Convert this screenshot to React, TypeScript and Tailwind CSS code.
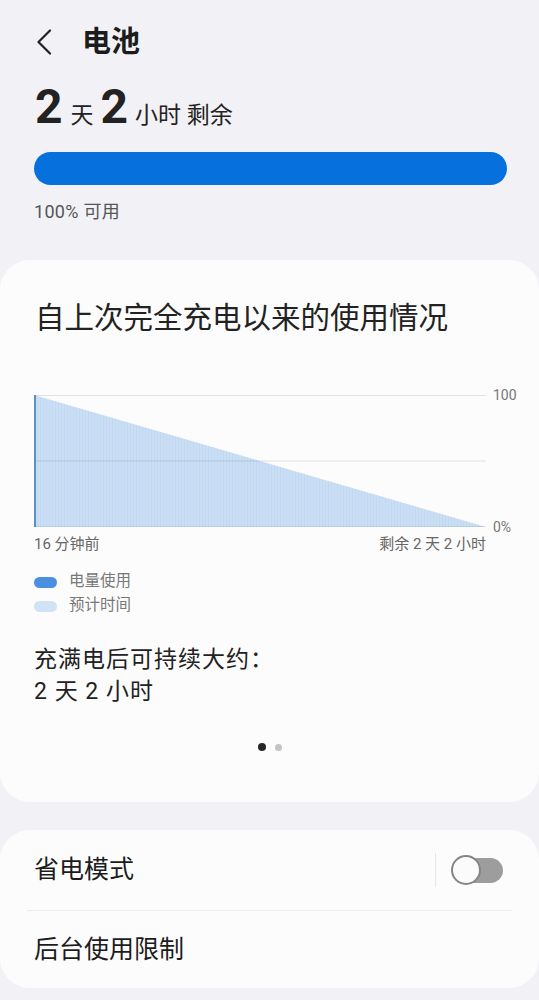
import React from "react";

export default function App() {
  return (
    <div className="w-[539px] h-[1000px] overflow-hidden bg-[#f2f2f6] text-[#1c1c1c] font-['Roboto','Noto_Sans_CJK_SC',sans-serif]">
      {/* Header */}
      <div className="flex items-center h-[40px] mt-[22px] pl-[36px]">
        <svg width="16" height="26" viewBox="0 0 16 26" fill="none">
          <path d="M14 1.5 L2.5 13 L14 24.5" stroke="#222" strokeWidth="2.2" strokeLinecap="round" strokeLinejoin="round" />
        </svg>
        <span className="ml-[30px] text-[29px] font-bold leading-[40px]">电池</span>
      </div>

      {/* Remaining time */}
      <div className="flex items-baseline mt-[21px] pl-[35px] leading-none text-[#222]">
        <span className="text-[48px] font-bold leading-none">2</span>
        <span className="ml-[8px] text-[23px] leading-none">天</span>
        <span className="ml-[7px] text-[48px] font-bold leading-none">2</span>
        <span className="ml-[7px] text-[23px] leading-none">小时 剩余</span>
      </div>

      {/* Progress bar */}
      <div className="mt-[21px] ml-[34px] w-[473px] h-[33px] rounded-full bg-[#0670dd]" />
      <div className="mt-[15px] pl-[34px] text-[18px] leading-[24px] tracking-[0.3px] text-[#555]">100% 可用</div>

      {/* Usage card */}
      <div className="mt-[36px] h-[542px] rounded-[30px] bg-[#fcfcfc] px-[34px] pt-[39px]">
        <div className="text-[29.5px] leading-[38px] text-[#222] pl-[1px]">自上次完全充电以来的使用情况</div>

        <div className="relative mt-[58px] w-[452px] h-[132px]">
          <svg width="452" height="132" viewBox="0 0 452 132" className="block">
            <defs>
              <pattern id="stripes" width="3" height="132" patternUnits="userSpaceOnUse">
                <rect x="0" y="0" width="3" height="132" fill="#cadff5" />
                <rect x="0" y="0" width="1" height="132" fill="#c2d8f1" />
              </pattern>
            </defs>
            <polygon points="0,0 0,132 452,132" fill="url(#stripes)" />
            <line x1="0" y1="0.5" x2="452" y2="0.5" stroke="rgba(0,0,0,0.1)" strokeWidth="1" />
            <line x1="0" y1="66" x2="452" y2="66" stroke="rgba(0,0,0,0.1)" strokeWidth="1" />
            <line x1="0" y1="131.5" x2="452" y2="131.5" stroke="rgba(0,0,0,0.07)" strokeWidth="1" />
            <rect x="0" y="0" width="2" height="132" fill="#5a8fc8" />
          </svg>
          <span className="absolute left-[459px] top-[-10px] text-[14px] leading-[20px] text-[#777]">100</span>
          <span className="absolute left-[459px] bottom-[-10px] text-[14px] leading-[20px] text-[#777]">0%</span>
        </div>

        <div className="mt-[7px] w-[452px] flex justify-between text-[15px] leading-[20px] text-[#666]">
          <span>16 分钟前</span>
          <span>剩余 2 天 2 小时</span>
        </div>

        <div className="mt-[16px] flex flex-col">
          <div className="flex items-center h-[24px]">
            <span className="w-[23px] h-[11px] rounded-full bg-[#4a90e0]" />
            <span className="ml-[12px] text-[15.5px] text-[#777]">电量使用</span>
          </div>
          <div className="flex items-center h-[24px]">
            <span className="w-[23px] h-[11px] rounded-full bg-[#cfe2f6]" />
            <span className="ml-[12px] text-[15.5px] text-[#777]">预计时间</span>
          </div>
        </div>

        <div className="mt-[26px] text-[23px] leading-[32px] tracking-[1px] text-[#222]">
          <div>充满电后可持续大约：</div>
          <div>2 天 2 小时</div>
        </div>

        <div className="mt-[35px] flex justify-center items-center gap-[9px] pl-[1px]">
          <span className="w-[8px] h-[8px] rounded-full bg-[#262626]" />
          <span className="w-[7px] h-[7px] rounded-full bg-[#c4c4c4]" />
        </div>
      </div>

      {/* Settings card */}
      <div className="mt-[28px] h-[158px] rounded-[30px] bg-[#fcfcfc]">
        <div className="flex items-center h-[80px] pl-[34px] pr-[36px]">
          <span className="flex-1 text-[25px] text-[#1c1c1c]">省电模式</span>
          <span className="w-px h-[34px] bg-[#e8e8e8]" />
          <div className="relative ml-[15px] w-[52px] h-[30px]">
            <span className="absolute right-0 top-[3px] w-[44px] h-[25px] rounded-full bg-[#9d9d9d]" />
            <span className="absolute left-0 top-0 w-[30px] h-[30px] rounded-full bg-[#fbfbfb] border-2 border-[#858585]" />
          </div>
        </div>
        <div className="mx-[27px] h-px bg-[#ececec]" />
        <div className="flex items-center h-[77px] pl-[34px]">
          <span className="text-[25px] text-[#1c1c1c]">后台使用限制</span>
        </div>
      </div>
    </div>
  );
}
